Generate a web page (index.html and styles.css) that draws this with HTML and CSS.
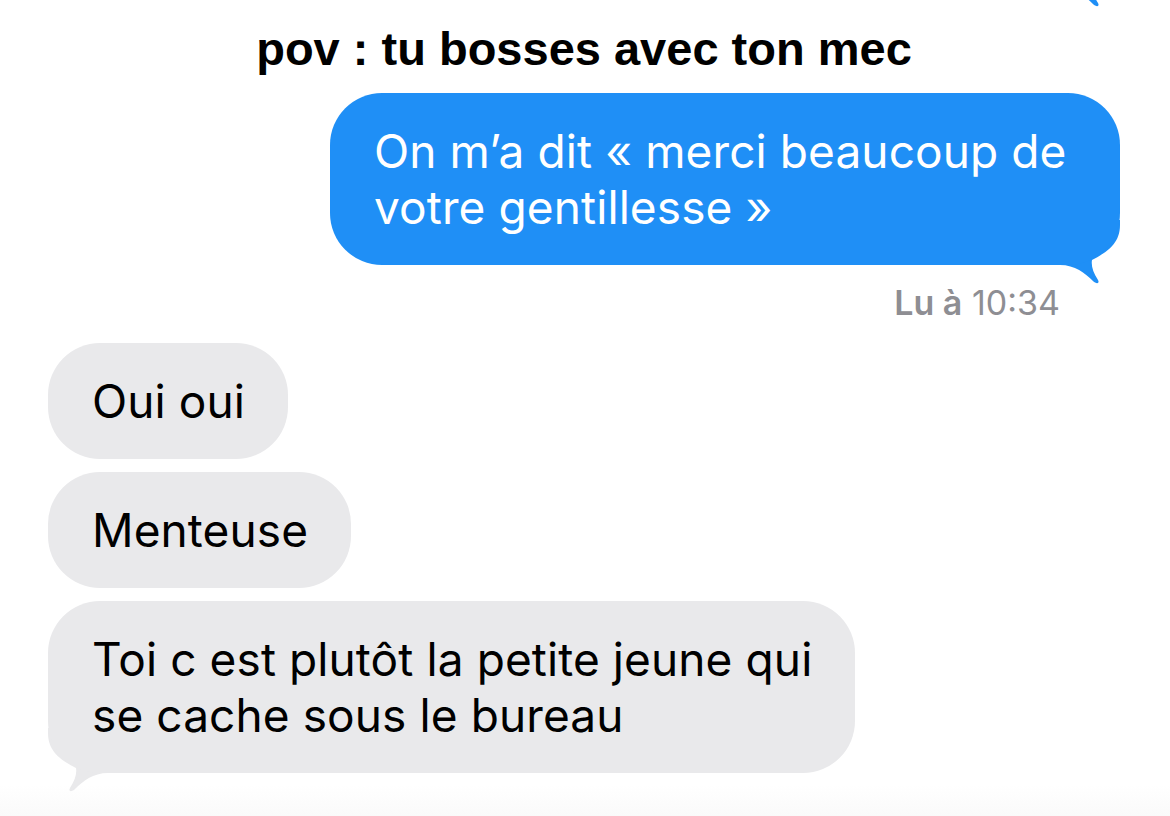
FILE: index.html
```html
<!DOCTYPE html>
<html lang="fr">
<head>
<meta charset="utf-8">
<title>pov : tu bosses avec ton mec</title>
<link rel="stylesheet" href="styles.css">
</head>
<body>
<main class="thread">
  <div class="bubble sent earlier">
    <svg class="tail" viewBox="0 0 72 66" width="72" height="66" aria-hidden="true"><path d="M0 45 L10 45 C25 45 35 53 43 61 C46 64 50 64 48 60 C43 52 41 46 42 40 C55 33 70 25 70 5 L70 0 L0 0 Z"/></svg>
  </div>

  <h1 class="caption">pov : tu bosses avec ton mec</h1>

  <div class="bubble sent">
    On m’a dit « merci beaucoup de<br>votre gentillesse »
    <svg class="tail" viewBox="0 0 72 66" width="72" height="66" aria-hidden="true"><path d="M0 45 L10 45 C25 45 35 53 43 61 C46 64 50 64 48 60 C43 52 41 46 42 40 C55 33 70 25 70 5 L70 0 L0 0 Z"/></svg>
  </div>
  <p class="receipt"><b>Lu à</b> 10:34</p>

  <div class="received-group">
    <div class="bubble received">Oui oui</div>
    <div class="bubble received">Menteuse</div>
    <div class="bubble received">
      Toi c est plutôt la petite jeune qui<br>se cache sous le bureau
      <svg class="tail" viewBox="0 0 72 66" width="72" height="66" aria-hidden="true"><path d="M0 45 L10 45 C25 45 35 53 43 61 C46 64 50 64 48 60 C43 52 41 46 42 40 C55 33 70 25 70 5 L70 0 L0 0 Z"/></svg>
    </div>
  </div>
</main>
</body>
</html>
```

FILE: styles.css
```css
* {
  box-sizing: border-box;
}

html, body {
  margin: 0;
  padding: 0;
}

body {
  width: 1170px;
  height: 816px;
  overflow: hidden;
  background: linear-gradient(to bottom, #ffffff 0, #ffffff 785px, #fafafa 816px);
  font-family: Inter, "Liberation Sans", Arial, sans-serif;
  -webkit-font-smoothing: antialiased;
}

.thread {
  display: flex;
  flex-direction: column;
  padding: 0 50px 0 48px;
}

/* chat bubbles */
.bubble {
  position: relative;
  width: fit-content;
  padding: 30px 43px 30px 44px;
  border-radius: 52px;
  font-size: 46px;
  line-height: 56px;
  letter-spacing: 0.1px;
}

/* the tail sits behind the bubble body so it never covers the text */
.bubble .tail {
  position: absolute;
  bottom: -21px;
  z-index: -1;
  display: block;
}

.sent {
  align-self: flex-end;
  width: 790px;
  background: #1f8ff6;
  color: #ffffff;
}

.sent .tail {
  right: -2px;
  fill: #1f8ff6;
}

.received {
  background: #e9e9eb;
  color: #000000;
}

.received .tail {
  left: -2px;
  fill: #e9e9eb;
  transform: scaleX(-1);
}

/* the tail of a bubble scrolled just above the top edge */
.earlier {
  width: 300px;
  height: 60px;
  margin-top: -72px;
  padding: 0;
}

/* overlay caption */
.caption {
  margin: 33px 0 0;
  text-align: center;
  font-family: "Liberation Sans", Arial, sans-serif;
  font-size: 47px;
  line-height: 56px;
  font-weight: 700;
  color: #000000;
}

.caption + .sent {
  margin-top: 16px;
}

/* read receipt */
.receipt {
  align-self: flex-end;
  margin: 18px 60px 0 0;
  font-size: 34px;
  line-height: 40px;
  color: #8e8e93;
}

.receipt b {
  font-weight: 600;
}

.received-group {
  display: flex;
  flex-direction: column;
  align-items: flex-start;
  gap: 13px;
  margin-top: 20px;
}
```
